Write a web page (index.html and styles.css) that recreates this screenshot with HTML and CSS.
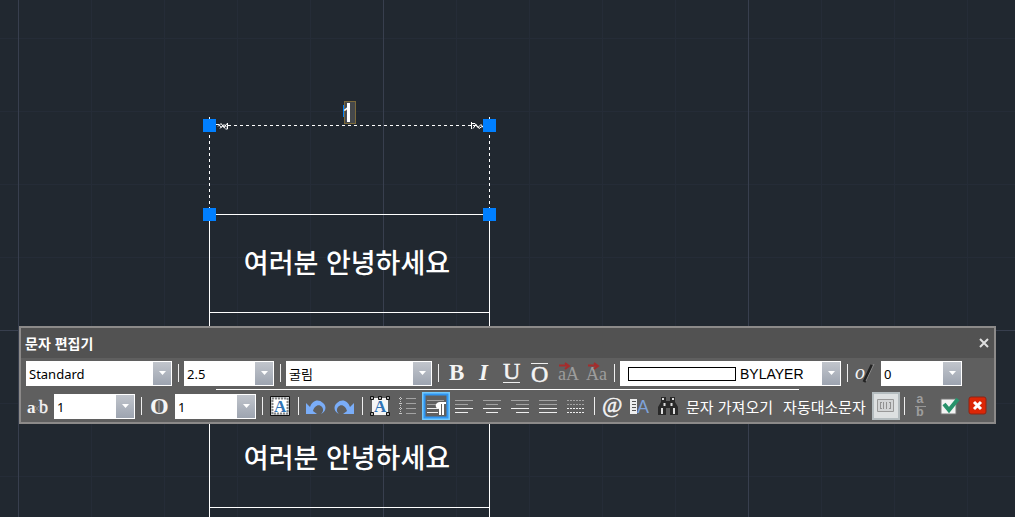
FILE: index.html
```html
<!DOCTYPE html>
<html lang="ko">
<head>
<meta charset="utf-8">
<meta name="viewport" content="width=device-width, initial-scale=1">
<title>문자 편집기</title>
<link rel="stylesheet" href="styles.css">
</head>
<body>
<main class="workspace">
  <svg class="drawing" aria-label="도면">
    <defs>
      <pattern id="minor" x="18" y="38" width="73" height="73" patternUnits="userSpaceOnUse">
        <path class="minor-line" d="M.5 0V73M0 .5H73"/>
      </pattern>
      <pattern id="major" x="18" y="330" width="365" height="365" patternUnits="userSpaceOnUse">
        <path class="major-line" d="M.5 0V365M0 .5H365"/>
      </pattern>
    </defs>
    <rect width="100%" height="100%" fill="url(#minor)"/>
    <rect width="100%" height="100%" fill="url(#major)"/>
    <g class="cell-lines">
      <path d="M209.5 214V517M489.5 214V517M209 214.5H490M209 312.5H490M209 507.5H490"/>
      <path stroke-dasharray="3 3" d="M209.5 117V214M489.5 117V214M228 125.5H471"/>
      <path d="M216 124.500h3l2 3 3-3 3 3M218 126.500l3-3 3 4 3-4M220 128.500l3-3 2 3M227.500 123v6h-2"/>
      <path d="M471.500 122v7M471 123.500h4l3 4 3-3 3 4M473 128.500l3-4 3 4 3-2M473 125.500h3l3 2"/>
    </g>
    <g class="grips">
      <rect x="203" y="119" width="13" height="13"/><rect x="483" y="119" width="13" height="13"/>
      <rect x="203" y="208" width="13" height="13"/><rect x="483" y="208" width="13" height="13"/>
      <rect x="343" y="105" width="1" height="12"/>
    </g>
    <rect class="edit-box" x="344.500" y="101.500" width="11" height="22"/>
    <path class="caret" d="M348.500 103V122"/>
    <text class="edit-text" x="342" y="121">1</text>
    <text class="cell-text" x="347" y="273">여러분 안녕하세요</text>
    <text class="cell-text" x="347" y="468">여러분 안녕하세요</text>
  </svg>

  <section class="editor" aria-labelledby="editor-title">
    <header class="titlebar">
      <h1 id="editor-title" class="title">문자 편집기</h1>
      <button class="close" aria-label="닫기"><svg width="12" height="12" viewBox="0 0 12 12"><path d="M2 2l8 8M10 2l-8 8"/></svg></button>
    </header>
    <div class="tools">
      <div class="row">
        <div class="combo wide"><select aria-label="문자 스타일"><option>Standard</option></select><svg class="arrow" viewBox="0 0 18 23"><path d="M6 9h7l-3.500 4z"/></svg></div>
        <span class="sep"></span>
        <div class="combo medium"><select aria-label="문자 높이"><option>2.5</option></select><svg class="arrow" viewBox="0 0 18 23"><path d="M6 9h7l-3.500 4z"/></svg></div>
        <span class="sep"></span>
        <div class="combo wide"><select aria-label="글꼴"><option>굴림</option></select><svg class="arrow" viewBox="0 0 18 23"><path d="M6 9h7l-3.500 4z"/></svg></div>
        <span class="sep"></span>
        <div class="group">
          <button class="tool" aria-label="굵게"><svg viewBox="0 0 24 24"><text class="serif bold" x="5" y="19" font-size="23">B</text></svg></button>
          <button class="tool" aria-label="기울임꼴"><svg viewBox="0 0 24 24"><text class="serif bold italic" x="7" y="19" font-size="23">I</text></svg></button>
          <button class="tool" aria-label="밑줄"><svg viewBox="0 0 24 24"><text class="serif" x="3" y="18" font-size="24" stroke="#f4f4f4" stroke-width=".5">U</text><path class="line bright" d="M3 21.500h17"/></svg></button>
          <button class="tool" aria-label="윗줄"><svg viewBox="0 0 24 24"><text class="serif" x="3" y="21" font-size="24" stroke="#f4f4f4" stroke-width=".5">O</text><path class="line bright" d="M3 2.500h17"/></svg></button>
          <button class="tool" aria-label="대문자로"><svg viewBox="0 0 24 24"><text class="serif dim" x="2" y="19" font-size="18">aA</text><path class="red-arrow" d="M3 4.500h9M9 2l4 3-4 3"/></svg></button>
          <button class="tool" aria-label="소문자로"><svg viewBox="0 0 24 24"><text class="serif dim" x="2" y="19" font-size="18">Aa</text><path class="red-arrow" d="M4 4.500h9M10 2l4 3-4 3"/></svg></button>
        </div>
        <span class="sep"></span>
        <div class="combo color"><i class="swatch"></i><select aria-label="색상"><option>BYLAYER</option></select><svg class="arrow" viewBox="0 0 18 23"><path d="M6 9h7l-3.500 4z"/></svg></div>
        <span class="sep"></span>
        <div class="group">
          <svg class="mark" viewBox="0 0 24 24"><text class="serif italic" x="2" y="18" font-size="20">o</text><path d="M11 21L19 4" stroke="#222" stroke-width="3"/><path d="M13 20L21 3" stroke="#8c8c8c"/></svg>
          <div class="combo small"><select aria-label="기울기 각도"><option>0</option></select><svg class="arrow" viewBox="0 0 18 23"><path d="M6 9h7l-3.500 4z"/></svg></div>
        </div>
      </div>
      <div class="rule"></div>
      <div class="row">
        <div class="group">
          <svg class="mark" viewBox="0 0 24 24"><path d="M9 12l4 5M13 12l-4 5" stroke="#888"/><text class="serif bold" x="1" y="19" font-size="17">a</text><text class="serif" x="13" y="19" font-size="18" stroke="#f4f4f4" stroke-width=".4">b</text></svg>
          <div class="combo small"><select aria-label="자간"><option>1</option></select><svg class="arrow" viewBox="0 0 18 23"><path d="M6 9h7l-3.500 4z"/></svg></div>
        </div>
        <span class="sep"></span>
        <div class="group">
          <svg class="mark" viewBox="0 0 24 24"><text class="serif bold" x="3" y="20" font-size="24">O</text><path d="M12 6v13" stroke="#888" stroke-width="2"/></svg>
          <div class="combo small"><select aria-label="폭 비율"><option>1</option></select><svg class="arrow" viewBox="0 0 18 23"><path d="M6 9h7l-3.500 4z"/></svg></div>
        </div>
        <span class="sep"></span>
        <button class="tool" aria-label="배경 마스크"><svg viewBox="0 0 24 24"><path d="M2.500 2.500h19v19h-19z" fill="#d0d3d5" stroke="#111"/><path d="M4.500 4.500h15v15h-15z" fill="#fff" stroke="#222" stroke-width="2" stroke-dasharray="1 2"/><text class="serif bold blue" x="6" y="18" font-size="17">A</text></svg></button>
        <span class="sep"></span>
        <div class="group">
          <button class="tool" aria-label="명령 취소"><svg viewBox="0 0 24 24"><path class="undo" d="M2 9v11h11l-4-3c1-5 6-8 9-4 2 3 1 5-1 7 5-2 6-8 2-11C14 4 8 7 6 13z"/></svg></button>
          <button class="tool" aria-label="명령 복구"><svg viewBox="0 0 24 24"><path class="undo" d="M22 9v11H11l4-3c-1-5-6-8-9-4-2 3-1 5 1 7-5-2-6-8-2-11C10 4 16 7 18 13z"/></svg></button>
        </div>
        <span class="sep"></span>
        <div class="group">
          <button class="tool" aria-label="문자 프레임"><svg viewBox="0 0 24 24"><path d="M4 4h16v17H4z" fill="#f5f5f5"/><g fill="#aaa" stroke="#111" stroke-width="1"><path d="M2.500 2.500h3v3h-3zM10.500 2.500h3v3h-3zM18.500 2.500h3v3h-3zM2.500 18.500h3v3h-3zM18.500 18.500h3v3h-3z"/></g><text class="serif bold blue" x="6" y="18" font-size="17">A</text></svg></button>
          <button class="tool" aria-label="글머리 기호"><svg viewBox="0 0 24 24"><path class="line dots" d="M4.500 3v18"/><path class="line soft" d="M10 4.500h10M10 9.500h10M10 14.500h10M10 19.500h10"/><path class="line dots" d="M3 4.500h3M3 9.500h3M3 14.500h3M3 19.500h3"/></svg></button>
          <button class="tool" aria-label="단락" aria-pressed="true"><svg viewBox="0 0 24 24"><path d="M-.5-.5h25v25h-25z" fill="#606060" stroke="#73c8fb" stroke-width="3"/><path d="M.5.5h23v23H.5z" fill="none" stroke="#2f96f3" stroke-width="2"/><path class="line soft" d="M3 6.500h17M3 10.500h10"/><path class="line bright" d="M3 14.500h11M3 18.500h11"/><path d="M20 8h2v2h-2v11h-2V10h-1v11h-2v-6c-5-1-4-7 1-7z" fill="#fff"/></svg></button>
          <button class="tool" aria-label="왼쪽 정렬"><svg viewBox="0 0 24 24"><path class="line soft" d="M3 6.500h18M3 10.500h13"/><path class="line bright" d="M3 14.500h18M3 18.500h13"/></svg></button>
          <button class="tool" aria-label="가운데 정렬"><svg viewBox="0 0 24 24"><path class="line soft" d="M3 6.500h18M6 10.500h12"/><path class="line bright" d="M3 14.500h18M6 18.500h12"/></svg></button>
          <button class="tool" aria-label="오른쪽 정렬"><svg viewBox="0 0 24 24"><path class="line soft" d="M3 6.500h18M8 10.500h13"/><path class="line bright" d="M3 14.500h18M8 18.500h13"/></svg></button>
          <button class="tool" aria-label="양쪽 정렬"><svg viewBox="0 0 24 24"><path class="line soft" d="M3 6.500h18M3 10.500h18"/><path class="line bright" d="M3 14.500h18M3 18.500h18"/></svg></button>
          <button class="tool" aria-label="분산 정렬"><svg viewBox="0 0 24 24"><path class="line soft dash" d="M3 6.500h18M3 10.500h18"/><path class="line bright dash" d="M3 14.500h18M3 18.500h18"/></svg></button>
        </div>
        <span class="sep"></span>
        <div class="group">
          <button class="tool" aria-label="기호"><svg viewBox="0 0 24 24"><text class="serif italic" x="2" y="18" font-size="22" stroke="#f4f4f4" stroke-width=".5">@</text></svg></button>
          <button class="tool" aria-label="필드"><svg viewBox="0 0 24 24"><path d="M2 5h7v15H2z" fill="#eee"/><path d="M4 7.500h4M4 10.500h4M4 13.500h4M4 16.500h4" stroke="#555"/><text class="sans field" x="9" y="19" font-size="18">A</text></svg></button>
          <button class="tool" aria-label="찾기"><svg viewBox="0 0 24 24"><path d="M5 3h5v4h4V3h5v5l3 5v8h-8v-7h-4v7H2v-8l3-5z" fill="#292929"/><path d="M7 4v2M17 4v2M8.500 9v3M15.500 9v3M6 14v6M18 14v6" stroke="#ddd" stroke-width="2"/></svg></button>
          <button class="text-tool">문자 가져오기</button>
          <button class="text-tool">자동대소문자</button>
          <button class="tool" aria-label="눈금자" aria-pressed="true"><svg viewBox="0 0 24 24"><path d="M-1-1h26v26H-1z" fill="#dde0e1" stroke="#b4bcbf" stroke-width="2"/><path d="M3.500 5.500h16v12h-16z" fill="#d2d4d5" stroke="#999"/><path d="M6.500 8v7M9.500 8v7M12.500 8v7M16.500 8v7M6 8.500h2M6 14.500h2M15 8.500h2M15 14.500h2" stroke="#919191" fill="none"/></svg></button>
        </div>
        <span class="sep"></span>
        <div class="group">
          <button class="tool" aria-label="스택"><svg viewBox="0 0 24 24"><text class="mono bold dim" x="6" y="9" font-size="13">a</text><path d="M5 12.500h11" stroke="#969696"/><text class="mono bold dim" x="6" y="22" font-size="13">b</text></svg></button>
          <button class="tool" aria-label="옵션"><svg viewBox="0 0 24 24"><path d="M3 5h15v15H3z" fill="#f4f4f4" stroke="#777"/><path d="M6 10l5 6L20 5" fill="none" stroke="#27926b" stroke-width="4"/></svg></button>
          <button class="tool" aria-label="취소"><svg viewBox="0 0 24 24"><rect x="3" y="3" width="17" height="17" rx="2" fill="#dc2606" stroke="#8d2515"/><path d="M8 8l7 7M15 8l-7 7" stroke="#fff" stroke-width="3"/></svg></button>
        </div>
      </div>
    </div>
  </section>
</main>
</body>
</html>
```

FILE: styles.css
```css
* { box-sizing: border-box; }

body {
  margin: 0;
  background: #212830;
  font-family: "Noto Sans", "Noto Sans CJK KR", sans-serif;
}

.workspace {
  position: relative;
  min-height: 100vh;
  overflow: hidden;
}

/* drawing canvas */
.drawing {
  position: absolute;
  inset: 0;
  width: 100%;
  height: 100%;
}
.minor-line { stroke: #252c37; }
.major-line { stroke: #383f4e; }
.cell-lines { fill: none; stroke: #fff; }
.grips { fill: #007fff; }
.edit-box { fill: #45484b; stroke: #7c6a3c; }
.caret { stroke: #fff; stroke-width: 3; }
.edit-text { font: 20px "Noto Sans", sans-serif; fill: #fff; }
.cell-text {
  font: 500 27px "Noto Sans CJK KR", sans-serif;
  fill: #fff;
  text-anchor: middle;
}

/* floating text editor window */
.editor {
  position: absolute;
  top: 326px;
  left: 19px;
  right: 19px;
  border: 2px solid #8c8a89;
  background: #5f5f5f;
}
.titlebar {
  display: flex;
  align-items: center;
  justify-content: space-between;
  height: 30px;
  padding: 0 4px;
  background: #525252;
}
.title {
  margin: 0;
  color: #fff;
  font: bold 14px/20px "Noto Sans CJK KR", sans-serif;
}
.close {
  display: flex;
  padding: 0;
  border: 0;
  background: none;
}
.close path { stroke: #e0e0e0; stroke-width: 2; }

.tools { padding: 3px 5px; }
.row, .group { display: flex; }
.group { gap: 4px; }
.rule {
  width: 583px;
  height: 1px;
  margin: 3px 0 4px 190px;
  background: #fff;
}
.sep {
  flex: none;
  width: 12px;
  height: 18px;
  margin-top: 3px;
  background: linear-gradient(#eee, #eee) 6px 0 / 1px 100% no-repeat;
}

.combo {
  position: relative;
  flex: none;
  height: 25px;
  background: #fff;
}
.wide { width: 146px; }
.medium { width: 90px; }
.small { width: 81px; }
.color { width: 221px; }
.combo select {
  appearance: none;
  width: 100%;
  height: 100%;
  padding: 0 20px 0 3px;
  border: 0;
  border-radius: 0;
  background: transparent;
  color: #000;
  font: 13px "Noto Sans", "Noto Sans CJK KR", sans-serif;
}
.color select { padding-left: 120px; font-family: "Liberation Sans", sans-serif; font-size: 14px; }
.arrow {
  position: absolute;
  top: 1px;
  right: 1px;
  width: 18px;
  height: 23px;
  background: linear-gradient(#c1c5cc, #9da4b0);
  fill: #fff;
  pointer-events: none;
}
.swatch {
  position: absolute;
  top: 6px;
  left: 8px;
  width: 108px;
  height: 14px;
  border: 1px solid #000;
}

.tool, .text-tool {
  flex: none;
  padding: 0;
  border: 0;
  background: none;
}
.tool { width: 24px; height: 24px; }
.tool svg, .mark {
  display: block;
  flex: none;
  width: 24px;
  height: 24px;
  overflow: visible;
}
.text-tool {
  width: 91px;
  height: 24px;
  color: #fff;
  font: 15px "Noto Sans CJK KR", sans-serif;
  white-space: nowrap;
}

.serif { font-family: "Liberation Serif", serif; fill: #f4f4f4; }
.sans { font-family: "Liberation Sans", sans-serif; }
.mono { font-family: "Liberation Mono", monospace; }
.bold { font-weight: bold; }
.italic { font-style: italic; }
.dim { fill: #9d9d9d; }
.blue { fill: #2f73b5; }
.field { fill: #7ea2d8; }
.undo { fill: #7aadf8; }
.red-arrow { fill: none; stroke: #a52c2c; stroke-width: 2; }
.line { fill: none; }
.bright { stroke: #efefef; }
.soft { stroke: #a3a3a3; }
.dots { stroke: #c8c8c8; stroke-dasharray: 1 1; }
.dash { stroke-dasharray: 2 1; }
```
